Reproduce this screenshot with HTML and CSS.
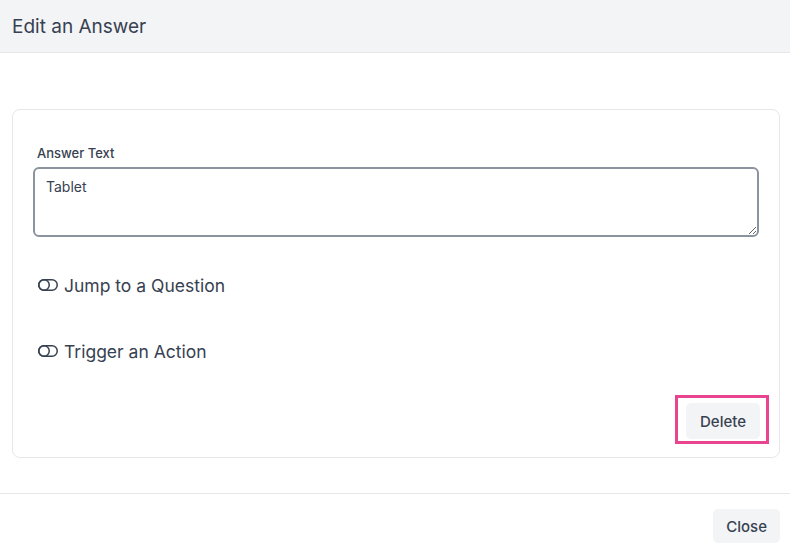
FILE: index.html
```html
<!DOCTYPE html>
<html lang="en">
<head>
    <meta charset="UTF-8">
    <meta name="viewport" content="width=device-width, initial-scale=1.0">
    <title>Edit an Answer</title>
    <link rel="stylesheet" href="styles.css">
</head>
<body>
    <div class="modal">
        <div class="modal-header">Edit an Answer</div>

        <div class="modal-body">
            <div class="card">
                <label class="field-label" for="answer">Answer Text</label>
                <textarea id="answer" class="answer-input">Tablet</textarea>

                <div class="toggle-row">
                    <svg class="toggle-icon" width="20" height="12" viewBox="0 0 20 12">
                        <rect x="0.75" y="0.75" width="18.5" height="10.5" rx="5.25" fill="none" stroke="#374151" stroke-width="1.5"/>
                        <circle cx="6" cy="6" r="5.25" fill="none" stroke="#374151" stroke-width="1.5"/>
                    </svg>
                    <span>Jump to a Question</span>
                </div>

                <div class="toggle-row">
                    <svg class="toggle-icon" width="20" height="12" viewBox="0 0 20 12">
                        <rect x="0.75" y="0.75" width="18.5" height="10.5" rx="5.25" fill="none" stroke="#374151" stroke-width="1.5"/>
                        <circle cx="6" cy="6" r="5.25" fill="none" stroke="#374151" stroke-width="1.5"/>
                    </svg>
                    <span>Trigger an Action</span>
                </div>

                <div class="card-actions">
                    <button class="btn btn-focused">Delete</button>
                </div>
            </div>
        </div>

        <div class="modal-footer">
            <button class="btn">Close</button>
        </div>
    </div>
</body>
</html>
```

FILE: styles.css
```css
body {
    margin: 0;
    padding: 0;
    font-family: Inter, "Noto Sans", sans-serif;
    color: #374151;
    background-color: #fff;
}
.modal {
    width: 790px;
}
.modal-header {
    height: 53px;
    box-sizing: border-box;
    padding: 0 12px;
    display: flex;
    align-items: center;
    background-color: #f3f4f6;
    border-bottom: 1px solid #e5e7eb;
    font-size: 19px;
    color: #374151;
}
.modal-body {
    padding: 56px 10px 35px 12px;
}
.card {
    border: 1px solid #e5e7eb;
    border-radius: 8px;
    padding: 35px 20px 18px 20px;
    display: flex;
    flex-direction: column;
}
.field-label {
    font-size: 13px;
    font-weight: 500;
    color: #374151;
    padding-left: 4px;
    margin-bottom: 6px;
}
.answer-input {
    height: 70px;
    box-sizing: border-box;
    border: 2px solid #8b949e;
    border-radius: 6px;
    padding: 9px 11px;
    font-family: inherit;
    font-size: 14px;
    color: #374151;
    resize: vertical;
    margin-bottom: 34px;
}
.toggle-row {
    display: flex;
    align-items: center;
    gap: 6px;
    padding-left: 5px;
    font-size: 17.5px;
    height: 28px;
    margin-bottom: 38px;
}
.toggle-row:last-of-type {
    margin-bottom: 23px;
}
.card-actions {
    display: flex;
    justify-content: flex-end;
}
.btn {
    background-color: #f3f4f6;
    border: none;
    border-radius: 5px;
    padding: 0 13px;
    height: 36px;
    font-family: inherit;
    font-size: 15px;
    font-weight: 500;
    color: #374151;
    cursor: pointer;
    display: block;
}
.btn-focused {
    position: relative;
    margin-right: -1px;
    padding: 0 14px;
}
.btn-focused::after {
    content: "";
    position: absolute;
    left: -11px;
    right: -9px;
    top: -8px;
    bottom: -5px;
    border: 3px solid #e9448f;
}
.modal-footer {
    border-top: 1px solid #e5e7eb;
    padding: 15px 10px;
    display: flex;
    justify-content: flex-end;
}
.modal-footer .btn {
    height: 34px;
}
```
